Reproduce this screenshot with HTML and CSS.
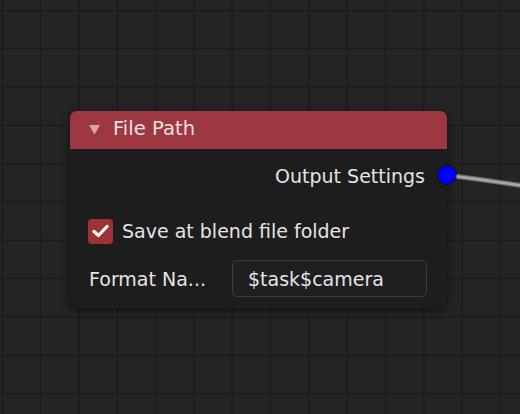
FILE: index.html
```html
<!DOCTYPE html>
<html>
<head>
<meta charset="utf-8">
<link rel="stylesheet" href="styles.css">
</head>
<body>
<div class="canvas">
  <svg class="wire" width="80" height="30" viewBox="0 0 80 30">
    <path d="M0 7 C 25 10, 50 14, 80 18" stroke="#6e6e6e" stroke-width="5" fill="none"/>
    <path d="M0 7 C 25 10, 50 14, 80 18" stroke="#a8a8a8" stroke-width="2.4" fill="none"/>
  </svg>
  <div class="node">
    <div class="node-header">
      <svg class="collapse" width="11" height="10" viewBox="0 0 11 10"><path d="M0 0 H11 L5.5 9.5 Z" fill="#d7a3a8"/></svg>
      <span class="title">File Path</span>
    </div>
    <div class="node-body">
      <div class="row output-row">
        <span>Output Settings</span>
        <span class="socket"></span>
      </div>
      <div class="row check-row">
        <span class="checkbox">
          <svg width="17" height="14" viewBox="0 0 17 14"><path d="M2 7.5 L6.5 11.5 L15 2.5" stroke="#fff" stroke-width="3.2" fill="none" stroke-linecap="round" stroke-linejoin="round"/></svg>
        </span>
        <span>Save at blend file folder</span>
      </div>
      <div class="row field-row">
        <span class="label">Format Na...</span>
        <span class="field">$task$camera</span>
      </div>
    </div>
  </div>
</div>
</body>
</html>
```

FILE: styles.css
```css
html, body {
  margin: 0;
  padding: 0;
}
body {
  width: 520px;
  height: 414px;
  overflow: hidden;
  font-family: "DejaVu Sans", sans-serif;
  font-size: 19px;
  color: #e4e4e4;
}
.canvas {
  position: relative;
  width: 520px;
  height: 414px;
  background-color: #242424;
  background-image:
    linear-gradient(to right, #181818 1px, transparent 1px),
    linear-gradient(to bottom, #181818 1px, transparent 1px);
  background-size: 38.3px 38.3px;
  background-position: 2px 10px;
}
.wire {
  position: absolute;
  left: 446px;
  top: 168px;
}
.node {
  position: absolute;
  left: 70px;
  top: 111px;
  width: 377px;
  height: 197px;
  border-radius: 7px;
  background: #1d1d1d;
  box-shadow: 0 2px 8px rgba(0,0,0,0.55);
  display: flex;
  flex-direction: column;
}
.node-header {
  height: 38px;
  box-sizing: border-box;
  padding-bottom: 4px;
  background: #9d3741;
  border-radius: 7px 7px 0 0;
  display: flex;
  align-items: center;
  padding-left: 19px;
  gap: 13px;
}
.collapse {
  margin-top: 3px;
}
.title {
  color: #e8e0e0;
  font-size: 19.6px;
}
.node-body {
  flex: 1;
  display: flex;
  flex-direction: column;
  padding: 10px 20px 10px 19px;
}
.row {
  display: flex;
  align-items: center;
}
.output-row {
  height: 34px;
  justify-content: flex-end;
  padding-right: 2px;
  position: relative;
}
.socket {
  position: absolute;
  right: -29px;
  top: 7px;
  width: 18px;
  height: 18px;
  border-radius: 50%;
  background: #0000ff;
  box-shadow: 0 0 0 1px rgba(0,0,0,0.6);
}
.check-row {
  height: 34px;
  margin-top: 21px;
  gap: 9px;
}
.checkbox {
  width: 25px;
  height: 25px;
  border-radius: 4px;
  background: #9c3136;
  display: flex;
  align-items: center;
  justify-content: center;
  margin-left: -1px;
}
.field-row {
  margin-top: 12px;
  height: 37px;
}
.label {
  width: 143px;
}
.field {
  flex: 1;
  height: 37px;
  box-sizing: border-box;
  border: 1px solid #3c3c3c;
  border-radius: 5px;
  background: #1f1f1f;
  display: flex;
  align-items: center;
  padding-left: 15px;
}
```
